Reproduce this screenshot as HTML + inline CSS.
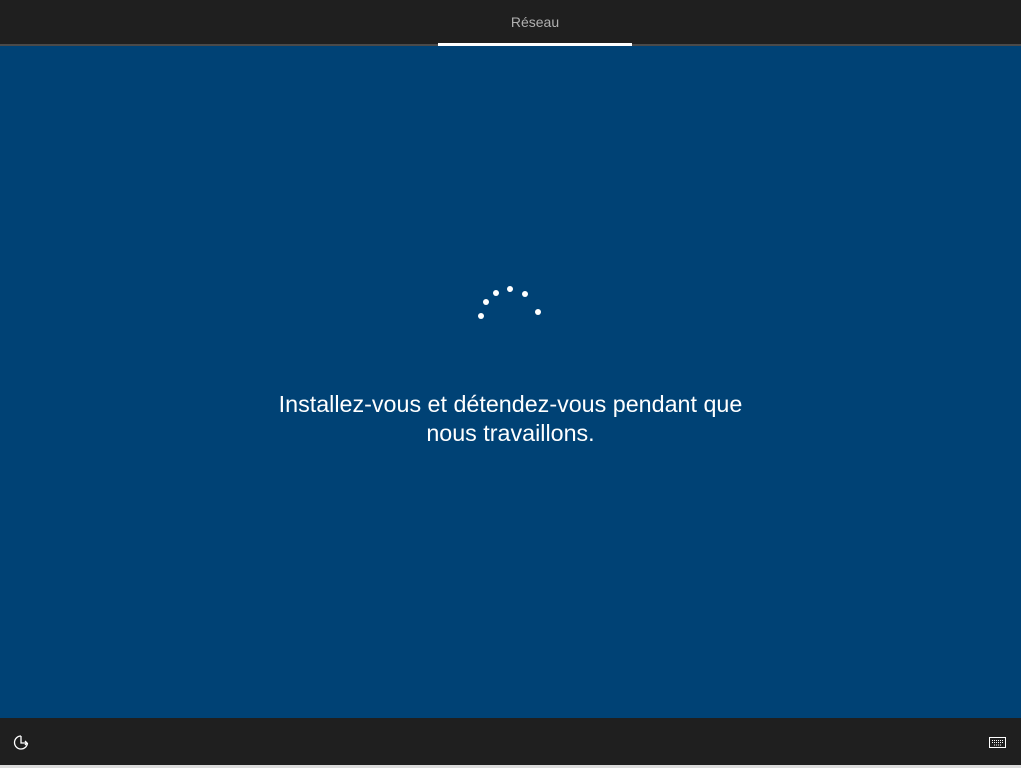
<!DOCTYPE html>
<html><head><style>
body{margin:0;width:1021px;height:768px;background:#004275;position:relative;overflow:hidden;font-family:"Liberation Sans",sans-serif}
.top{position:absolute;left:0;top:0;width:1021px;height:44px;background:#1f1f1f}
.line{position:absolute;left:0;top:44px;width:1021px;height:2px;background:#4a4a4a}
.ul{position:absolute;left:438px;top:43px;width:194px;height:3px;background:#fff}
.tab{position:absolute;left:438px;width:194px;top:14px;text-align:center;color:#b0b0b0;font-size:14px}
.bot{position:absolute;left:0;top:718px;width:1021px;height:47px;background:#1f1f1f}
.bl{position:absolute;left:0;top:765px;width:1021px;height:3px;background:#dcdcdc}
.msg{position:absolute;left:0;width:1021px;top:390px;text-align:center;color:#fff;font-size:23.3px;line-height:29px}
.d{position:absolute;width:6px;height:6px;border-radius:50%;background:#fff}
</style></head><body>
<div class="top"></div><div class="line"></div><div class="ul"></div>
<div class="tab">Réseau</div>
<div class="d" style="left:478px;top:313px"></div>
<div class="d" style="left:483px;top:299px"></div>
<div class="d" style="left:493px;top:290px"></div>
<div class="d" style="left:507px;top:286px"></div>
<div class="d" style="left:522px;top:291px"></div>
<div class="d" style="left:535px;top:309px"></div>
<div class="msg">Installez-vous et détendez-vous pendant que<br>nous travaillons.</div>
<div class="bot"></div><div class="bl"></div>
<svg style="position:absolute;left:13px;top:734px" width="18" height="18" viewBox="0 0 18 18" fill="none" stroke="#fff" stroke-width="1.3">
<path d="M8 2 A6.5 6.5 0 1 0 14.5 9"/><path d="M8 2 V9 H14"/><path d="M12 7 L14 9 L12 11"/></svg>
<svg style="position:absolute;left:989px;top:737px" width="17" height="11" viewBox="0 0 17 11" fill="none" stroke="#fff" stroke-width="1">
<rect x="0.5" y="0.5" width="16" height="10"/><path d="M3 3.5h11M3 5.5h11M5 8h7" stroke-dasharray="1 1"/></svg>
</body></html>
